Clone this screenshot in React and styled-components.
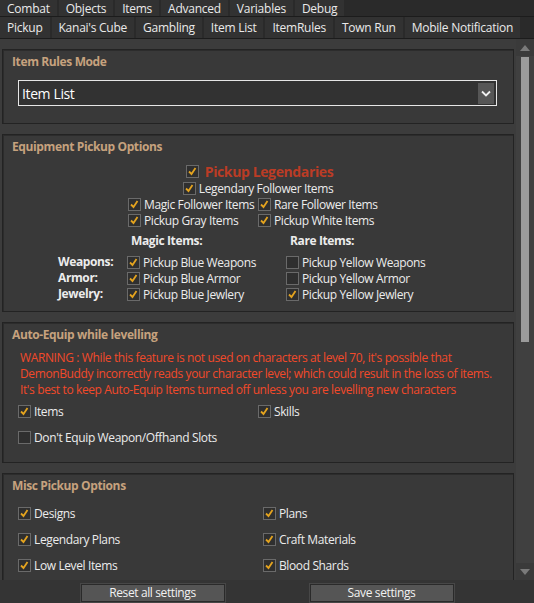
import React from 'react';
import styled, { createGlobalStyle } from 'styled-components';

const GlobalStyle = createGlobalStyle`
  html, body {
    margin: 0;
    padding: 0;
    background: #3c3c3c;
  }
  * {
    box-sizing: border-box;
  }
`;

const Window = styled.div`
  width: 534px;
  height: 603px;
  display: flex;
  flex-direction: column;
  overflow: hidden;
  font-family: 'Open Sans', 'Noto Sans', sans-serif;
  font-size: 12px;
  letter-spacing: -0.38px;
  color: #ececec;
  background: #3c3c3c;
`;

const TabRow = styled.div`
  display: flex;
  gap: 2px;
  height: ${props => props.height}px;
  background: #2a2a2a;
  border-bottom: 1px solid #1c1c1c;
  flex-shrink: 0;
`;

const Tab = styled.div`
  display: flex;
  align-items: center;
  padding: 0 7px;
  background: #323232;
  color: #eaeaea;
  letter-spacing: -0.25px;
  white-space: nowrap;
`;

const Body = styled.div`
  display: flex;
  height: 541px;
  flex-shrink: 0;
`;

const Content = styled.div`
  flex: 1;
  display: flex;
  flex-direction: column;
  gap: 10px;
  padding: 10px 2px 0 2px;
  overflow: hidden;
`;

const Scrollbar = styled.div`
  width: 18px;
  display: flex;
  flex-direction: column;
  align-items: center;
  background: #404040;
`;

const ArrowButton = styled.div`
  height: 17px;
  width: 100%;
  display: flex;
  align-items: center;
  justify-content: center;
  background: #3a3a3a;
`;

const Track = styled.div`
  flex: 1;
  width: 100%;
  display: flex;
  justify-content: center;
  padding-top: 1px;
`;

const Thumb = styled.div`
  width: 8px;
  height: 285px;
  background: #9b9b9b;
`;

const Group = styled.section`
  flex-shrink: 0;
  background: #393939;
  border: 1px solid #232323;
  box-shadow: inset 1px 1px 0 #2c2c2c;
  padding: 5px 9px ${props => props.bottom || 0}px;
`;

const Title = styled.div`
  font-weight: 700;
  line-height: 14px;
  color: #c6a27e;
`;

const Select = styled.div`
  display: flex;
  align-items: center;
  justify-content: space-between;
  height: 26px;
  margin: 11px 7px 0 6px;
  padding: 0 2px 0 3px;
  border: 1px solid #e6e6e6;
  background: #323232;
  font-size: 14px;
  color: #ffffff;
`;

const SelectButton = styled.div`
  width: 16px;
  height: 21px;
  display: flex;
  align-items: center;
  justify-content: center;
  background: #565656;
`;

const CenterRow = styled.div`
  display: flex;
  justify-content: center;
  margin-top: ${props => props.top || 0}px;
`;

const PairGrid = styled.div`
  display: grid;
  grid-template-columns: 130px 130px;
  justify-content: center;
`;

const ItemGrid = styled.div`
  display: grid;
  grid-template-columns: 69px 159px auto;
  grid-template-rows: 21px repeat(3, 16px);
  margin: 5px 0 0 46px;
  align-items: start;
`;

const ColumnHead = styled.div`
  font-weight: 700;
  padding-left: 4px;
  line-height: 16px;
`;

const RowLabel = styled.div`
  font-weight: 700;
  line-height: 16px;
  white-space: nowrap;
`;

const Warning = styled.p`
  margin: 8px 0 0 8px;
  line-height: 16px;
  color: #f2492a;
`;

const OptionGrid = styled.div`
  display: grid;
  grid-template-columns: ${props => props.left}px auto;
  row-gap: 10px;
  margin: ${props => props.top}px 0 0 6px;
`;

const Wide = styled.div`
  grid-column: 1 / -1;
`;

const Label = styled.label`
  display: flex;
  align-items: center;
  gap: 3px;
  height: ${props => (props.big ? 18 : 16)}px;
  white-space: nowrap;
  font-size: ${props => (props.big ? 14 : 12)}px;
  font-weight: ${props => (props.big ? 700 : 400)};
  color: ${props => (props.big ? '#bb3c25' : '#ececec')};
`;

const Box = styled.span`
  width: 13px;
  height: 13px;
  flex-shrink: 0;
  display: flex;
  align-items: center;
  justify-content: center;
  border: 1px solid #6a6a6a;
  background: #2f2f2f;
  margin-left: ${props => (props.big ? 3 : 0)}px;
  margin-right: ${props => (props.big ? 3 : 0)}px;
`;

const Footer = styled.div`
  flex: 1;
  display: flex;
  justify-content: center;
  gap: 85px;
  padding-top: 4px;
  background: #343434;
`;

const Button = styled.div`
  width: 144px;
  height: 18px;
  display: flex;
  align-items: center;
  justify-content: center;
  background: #555555;
  border: 1px solid #2a2a2a;
  box-shadow: 0 0 0 1px #474747;
  color: #f2f2f2;
  line-height: 16px;
`;

const Check = ({ checked, big, children }) => (
  <Label big={big}>
    <Box big={big}>
      {checked && (
        <svg width="11" height="11" viewBox="0 0 11 11">
          <path d="M2 5.5 L4.5 8 L8.5 2" fill="none" stroke="#e3a31f" strokeWidth="1.8" />
        </svg>
      )}
    </Box>
    {children}
  </Label>
);

const Triangle = ({ down }) => (
  <svg width="10" height="8" viewBox="0 0 10 8">
    <path d={down ? 'M0 1 L10 1 L5 7 Z' : 'M0 7 L10 7 L5 1 Z'} fill="#7a7a7a" />
  </svg>
);

const topTabs = ['Combat', 'Objects', 'Items', 'Advanced', 'Variables', 'Debug'];
const subTabs = ['Pickup', "Kanai's Cube", 'Gambling', 'Item List', 'ItemRules', 'Town Run', 'Mobile Notification'];

const itemRows = [
  ['Weapons:', 'Pickup Blue Weapons', true, 'Pickup Yellow Weapons', false],
  ['Armor:', 'Pickup Blue Armor', true, 'Pickup Yellow Armor', false],
  ['Jewelry:', 'Pickup Blue Jewlery', true, 'Pickup Yellow Jewlery', true],
];

export default function App() {
  return (
    <Window>
      <GlobalStyle />
      <TabRow height={17}>
        {topTabs.map(t => <Tab key={t}>{t}</Tab>)}
      </TabRow>
      <TabRow height={22}>
        {subTabs.map(t => <Tab key={t}>{t}</Tab>)}
      </TabRow>
      <Body>
        <Content>
          <Group bottom={17}>
            <Title>Item Rules Mode</Title>
            <Select>
              Item List
              <SelectButton>
                <svg width="10" height="7" viewBox="0 0 10 7">
                  <path d="M1 1.5 L5 5.5 L9 1.5" fill="none" stroke="#f0f0f0" strokeWidth="1.8" />
                </svg>
              </SelectButton>
            </Select>
          </Group>

          <Group bottom={9}>
            <Title>Equipment Pickup Options</Title>
            <CenterRow top={8}>
              <Check checked big>Pickup Legendaries</Check>
            </CenterRow>
            <CenterRow>
              <Check checked>Legendary Follower Items</Check>
            </CenterRow>
            <PairGrid>
              <Check checked>Magic Follower Items</Check>
              <Check checked>Rare Follower Items</Check>
              <Check checked>Pickup Gray Items</Check>
              <Check checked>Pickup White Items</Check>
            </PairGrid>
            <ItemGrid>
              <span />
              <ColumnHead>Magic Items:</ColumnHead>
              <ColumnHead>Rare Items:</ColumnHead>
              {itemRows.map(([kind, magic, magicOn, rare, rareOn]) => (
                <React.Fragment key={kind}>
                  <RowLabel>{kind}</RowLabel>
                  <Check checked={magicOn}>{magic}</Check>
                  <Check checked={rareOn}>{rare}</Check>
                </React.Fragment>
              ))}
            </ItemGrid>
          </Group>

          <Group bottom={17}>
            <Title>Auto-Equip while levelling</Title>
            <Warning>
              WARNING : While this feature is not used on characters at level 70, it's possible that<br />
              DemonBuddy incorrectly reads your character level; which could result in the loss of items.<br />
              It's best to keep Auto-Equip Items turned off unless you are levelling new characters
            </Warning>
            <OptionGrid left={240} top={5}>
              <Check checked>Items</Check>
              <Check checked>Skills</Check>
              <Wide>
                <Check>Don't Equip Weapon/Offhand Slots</Check>
              </Wide>
            </OptionGrid>
          </Group>

          <Group bottom={14}>
            <Title>Misc Pickup Options</Title>
            <OptionGrid left={245} top={12}>
              <Check checked>Designs</Check>
              <Check checked>Plans</Check>
              <Check checked>Legendary Plans</Check>
              <Check checked>Craft Materials</Check>
              <Check checked>Low Level Items</Check>
              <Check checked>Blood Shards</Check>
              <Check checked>Gems</Check>
              <Check checked>Potions</Check>
            </OptionGrid>
          </Group>
        </Content>
        <Scrollbar>
          <ArrowButton><Triangle /></ArrowButton>
          <Track><Thumb /></Track>
          <ArrowButton><Triangle down /></ArrowButton>
        </Scrollbar>
      </Body>
      <Footer>
        <Button>Reset all settings</Button>
        <Button>Save settings</Button>
      </Footer>
    </Window>
  );
}
